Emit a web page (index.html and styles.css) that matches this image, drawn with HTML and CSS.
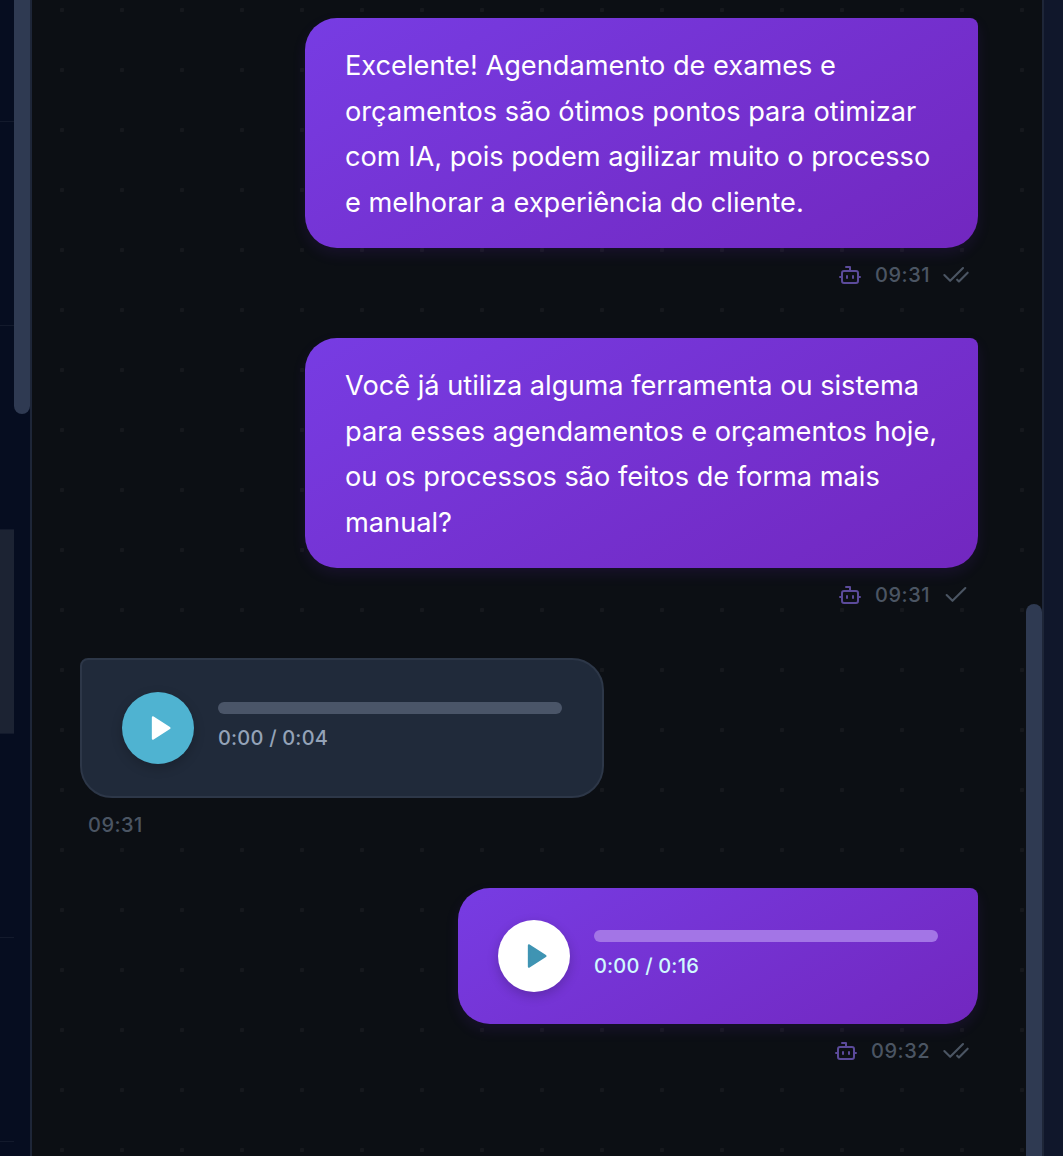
FILE: index.html
```html
<!DOCTYPE html>
<html lang="pt-BR">
<head>
  <meta charset="UTF-8" />
  <meta name="viewport" content="width=device-width, initial-scale=1.0" />
  <title>Conversa</title>
  <link rel="stylesheet" href="styles.css">
</head>
<body>
  <div class="app">
    <aside class="sidebar">
      <div class="conv-list">
        <div class="conv-row conv-first"></div>
        <div class="conv-row"></div>
        <div class="conv-row"></div>
        <div class="conv-row conv-active"></div>
        <div class="conv-row"></div>
        <div class="conv-row"></div>
      </div>
      <div class="track"><div class="thumb thumb-left"></div></div>
    </aside>

    <main class="chat">
      <div class="messages">
        <div class="msg msg-out">
          <div class="bubble bubble-out">Excelente! Agendamento de exames e orçamentos são ótimos pontos para otimizar com IA, pois podem agilizar muito o processo e melhorar a experiência do cliente.</div>
          <div class="meta">
            <svg class="icon-bot" viewBox="0 0 24 24"><path d="M12 8V4H8"/><rect x="4" y="8" width="16" height="12" rx="2"/><path d="M2 14h2"/><path d="M20 14h2"/><path d="M15 13v2"/><path d="M9 13v2"/></svg>
            <span>09:31</span>
            <svg class="icon-check" viewBox="0 0 24 24"><path d="M18 6 7 17l-5-5"/><path d="m22 10-7.5 7.5L13 16"/></svg>
          </div>
        </div>

        <div class="msg msg-out">
          <div class="bubble bubble-out">Você já utiliza alguma ferramenta ou sistema para esses agendamentos e orçamentos hoje, ou os processos são feitos de forma mais manual?</div>
          <div class="meta">
            <svg class="icon-bot" viewBox="0 0 24 24"><path d="M12 8V4H8"/><rect x="4" y="8" width="16" height="12" rx="2"/><path d="M2 14h2"/><path d="M20 14h2"/><path d="M15 13v2"/><path d="M9 13v2"/></svg>
            <span>09:31</span>
            <svg class="icon-check" viewBox="0 0 24 24"><path d="M20 6 9 17l-5-5"/></svg>
          </div>
        </div>

        <div class="msg msg-in">
          <div class="audio audio-in">
            <div class="play play-in">
              <svg viewBox="0 0 24 24"><polygon points="6 3 20 12 6 21"/></svg>
            </div>
            <div class="audio-body">
              <div class="bar"></div>
              <div class="audio-time">0:00 / 0:04</div>
            </div>
          </div>
          <div class="meta"><span>09:31</span></div>
        </div>

        <div class="msg msg-out">
          <div class="audio audio-out">
            <div class="play play-out">
              <svg viewBox="0 0 24 24"><polygon points="6 3 20 12 6 21"/></svg>
            </div>
            <div class="audio-body">
              <div class="bar"></div>
              <div class="audio-time">0:00 / 0:16</div>
            </div>
          </div>
          <div class="meta">
            <svg class="icon-bot" viewBox="0 0 24 24"><path d="M12 8V4H8"/><rect x="4" y="8" width="16" height="12" rx="2"/><path d="M2 14h2"/><path d="M20 14h2"/><path d="M15 13v2"/><path d="M9 13v2"/></svg>
            <span>09:32</span>
            <svg class="icon-check" viewBox="0 0 24 24"><path d="M18 6 7 17l-5-5"/><path d="m22 10-7.5 7.5L13 16"/></svg>
          </div>
        </div>
      </div>
      <div class="track"><div class="thumb thumb-right"></div></div>
    </main>

    <div class="panel"></div>
  </div>
</body>
</html>
```

FILE: styles.css
```css
body {
  font-family: Inter, 'Liberation Sans', sans-serif;
  background: white;
  margin: 0;
}
.app {
  display: flex;
  height: 1156px;
  overflow: hidden;
  background: #060d20;
}

/* left conversation list, only its right edge is in view */
.sidebar {
  display: flex;
  width: 30px;
  flex-shrink: 0;
  border-right: 2px solid #1e2638;
  background: #060d20;
}
.conv-list {
  width: 14px;
  flex-shrink: 0;
}
.conv-row {
  height: 203px;
  border-bottom: 1px solid #131a2c;
}
.conv-first {
  height: 121px;
}
.conv-active {
  background: #1c2333;
}

.track {
  width: 16px;
  flex-shrink: 0;
}
.thumb {
  width: 16px;
  background: #2f3a52;
}
.thumb-left {
  height: 414px;
  border-radius: 0 0 8px 8px;
}
.thumb-right {
  height: 552px;
  margin-top: 604px;
  border-radius: 8px 8px 0 0;
}

/* chat */
.chat {
  display: flex;
  width: 1010px;
  flex-shrink: 0;
  background-color: #0c0f14;
  background-image: radial-gradient(circle at center, rgba(255, 255, 255, 0.04) 2px, transparent 2.5px);
  background-size: 60px 60px;
  background-position: 0 -20px;
}
.messages {
  flex: 1;
  display: flex;
  flex-direction: column;
  gap: 49px;
  padding: 18px 48px 0;
}
.msg {
  display: flex;
  flex-direction: column;
  gap: 13px;
}
.msg-out {
  align-items: flex-end;
}
.msg-in {
  align-items: flex-start;
}

.bubble {
  box-sizing: border-box;
  width: 673px;
  padding: 25px 40px 23px;
  font-size: 27.2px;
  line-height: 45.5px;
  color: white;
}
.bubble-out,
.audio-out {
  background: linear-gradient(150deg, #773ce3, #7227bf);
  border-radius: 32px 8px 32px 32px;
  box-shadow: 0 6px 14px rgba(109, 40, 217, 0.12);
}

.meta {
  display: flex;
  align-items: center;
  gap: 12px;
  height: 28px;
  padding: 0 8px;
  font-size: 20px;
  font-weight: 500;
  letter-spacing: 0.5px;
  color: #4b5563;
}
.meta svg {
  fill: none;
  stroke-linecap: round;
  stroke-linejoin: round;
}
.icon-bot {
  width: 24px;
  height: 24px;
  margin-left: -1px;
  margin-right: 1px;
  stroke: #5b4a9a;
  stroke-width: 2;
}
.icon-check {
  width: 28px;
  height: 28px;
  stroke: #4b5563;
  stroke-width: 1.8;
}

/* audio message */
.audio {
  box-sizing: border-box;
  display: flex;
  align-items: center;
  gap: 24px;
}
.audio-in {
  width: 524px;
  height: 140px;
  padding: 0 40px;
  background: #202a3a;
  border: 2px solid #2d3748;
  border-radius: 8px 32px 32px 32px;
}
.audio-out {
  width: 520px;
  height: 136px;
  padding: 0 40px;
}
.play {
  display: flex;
  align-items: center;
  justify-content: center;
  width: 72px;
  height: 72px;
  flex-shrink: 0;
  border-radius: 50%;
  box-shadow: 0 4px 12px rgba(0, 0, 0, 0.2);
}
.play svg {
  width: 28px;
  height: 28px;
  margin-left: 4px;
  stroke-linejoin: round;
  stroke-width: 2;
}
.play-in {
  background: #4fb3d1;
}
.play-in svg {
  fill: white;
  stroke: white;
}
.play-out {
  background: white;
}
.play-out svg {
  fill: #3f94b3;
  stroke: #3f94b3;
}
.audio-body {
  flex: 1;
  display: flex;
  flex-direction: column;
  gap: 12px;
  margin-bottom: 4px;
}
.bar {
  height: 12px;
  border-radius: 6px;
}
.audio-time {
  font-size: 20px;
  line-height: 24px;
  font-weight: 500;
  letter-spacing: 0.2px;
}
.audio-in .bar {
  background: #4a5568;
}
.audio-in .audio-time {
  color: #94a3b8;
}
.audio-out .bar {
  background: #a375e6;
}
.audio-out .audio-time {
  color: #cffafe;
}

.panel {
  flex: 1;
  border-left: 2px solid #1e2638;
  background: #10172b;
}
```
